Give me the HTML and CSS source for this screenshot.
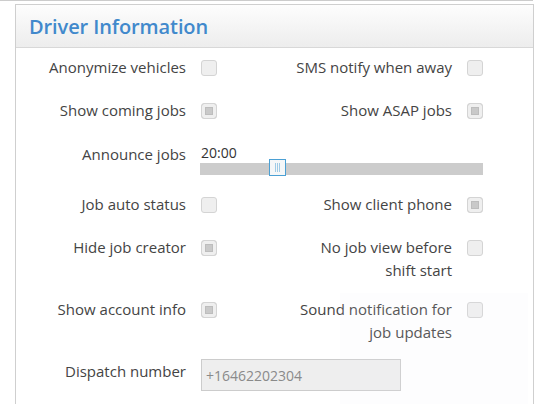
FILE: index.html
```html
<!DOCTYPE html>
<html>
<head>
<meta charset="utf-8">
<link rel="stylesheet" href="styles.css">
</head>
<body>
<div class="top-rule"></div>
<div class="panel">
  <div class="panel-heading"><h2 class="panel-title">Driver Information</h2></div>
  <div class="panel-body">
    <div class="row">
      <label class="lbl">Anonymize vehicles</label>
      <div class="ctl"><span class="cb"></span></div>
      <label class="lbl">SMS notify when away</label>
      <div class="ctl"><span class="cb"></span></div>
    </div>
    <div class="row">
      <label class="lbl">Show coming jobs</label>
      <div class="ctl"><span class="cb cb-on"></span></div>
      <label class="lbl">Show ASAP jobs</label>
      <div class="ctl"><span class="cb cb-on"></span></div>
    </div>
    <div class="row row-slider">
      <label class="lbl">Announce jobs</label>
      <div class="ctl ctl-wide">
        <div class="slider-value">20:00</div>
        <div class="slider-track">
          <span class="slider-handle" style="left: 27.7%"><i></i><i></i><i></i></span>
        </div>
      </div>
    </div>
    <div class="row">
      <label class="lbl">Job auto status</label>
      <div class="ctl"><span class="cb"></span></div>
      <label class="lbl">Show client phone</label>
      <div class="ctl"><span class="cb cb-on"></span></div>
    </div>
    <div class="row row-tall">
      <label class="lbl">Hide job creator</label>
      <div class="ctl"><span class="cb cb-on"></span></div>
      <label class="lbl">No job view before shift start</label>
      <div class="ctl"><span class="cb"></span></div>
    </div>
    <div class="row row-tall">
      <label class="lbl">Show account info</label>
      <div class="ctl"><span class="cb cb-on"></span></div>
      <label class="lbl">Sound notification for job updates</label>
      <div class="ctl"><span class="cb"></span></div>
    </div>
    <div class="row">
      <label class="lbl">Dispatch number</label>
      <div class="ctl ctl-wide">
        <input class="field" type="text" value="+16462202304" disabled>
      </div>
    </div>
  </div>
</div>
<div class="watermark"></div>
</body>
</html>
```

FILE: styles.css
```css
html, body {
  margin: 0;
  padding: 0;
  background: #ffffff;
}

body {
  width: 548px;
  height: 404px;
  overflow: hidden;
  position: relative;
  font-family: "Open Sans", "Liberation Sans", sans-serif;
  font-size: 15px;
  color: #444444;
}

.top-rule {
  width: 533px;
  height: 1px;
  background: #cccccc;
}

.panel {
  box-sizing: border-box;
  margin: 3px 14px 0 15px;
  border: 1px solid #cfcfcf;
  border-bottom: none;
  height: 400px;
}

.panel-heading {
  height: 42px;
  background: linear-gradient(#fdfdfd, #ededed);
  border-bottom: 1px solid #d8d8d8;
  display: flex;
  align-items: center;
  padding-left: 13px;
}

.panel-title {
  margin: 0;
  font-size: 20px;
  font-weight: 600;
  color: #4189cc;
  letter-spacing: -0.1px;
}

.panel-body {
  padding: 7.5px 50px 0 10px;
}

.row {
  display: grid;
  grid-template-columns: 160px 1fr 160px 16px;
  column-gap: 15px;
  align-items: start;
  margin-bottom: 21px;
}

.row-slider { margin-bottom: 18px; }
.row-tall { margin-bottom: 17px; }

.lbl {
  text-align: right;
  line-height: 22.5px;
}

.ctl {
  padding-top: 4px;
}

.ctl-wide {
  grid-column: 2 / -1;
  padding-top: 0;
}

.cb {
  display: block;
  width: 14px;
  height: 14px;
  border: 1px solid #d4d4d4;
  border-radius: 3px;
  background: #efefef;
}

.cb-on {
  box-shadow: inset 0 0 0 3px #efefef, inset 0 0 0 4px #bdbdbd;
  background: #c9c9c9;
}

.slider-value {
  font-size: 14px;
  line-height: 20px;
  color: #333333;
}

.slider-track {
  position: relative;
  height: 12px;
  background: #cccccc;
  margin-left: -1px;
}

.slider-handle {
  position: absolute;
  top: -4px;
  margin-left: -9px;
  width: 15px;
  height: 15px;
  border: 1px solid #4ba0d4;
  background: #f5f7f8;
  display: flex;
  justify-content: center;
  align-items: center;
  gap: 1px;
}

.slider-handle i {
  display: block;
  width: 1px;
  height: 9px;
  background: #9fcbe6;
}

.field {
  display: block;
  box-sizing: border-box;
  width: 200px;
  height: 32px;
  margin-top: -1px;
  padding: 0 4px;
  border: 1px solid #cccccc;
  background: #eeeeee;
  font-family: "Open Sans", "Liberation Sans", sans-serif;
  font-size: 14px;
  color: #8a8a8a;
}

.watermark {
  position: absolute;
  left: 340px;
  top: 293px;
  width: 188px;
  height: 111px;
  background: rgba(240, 242, 248, 0.12);
  pointer-events: none;
}
```
